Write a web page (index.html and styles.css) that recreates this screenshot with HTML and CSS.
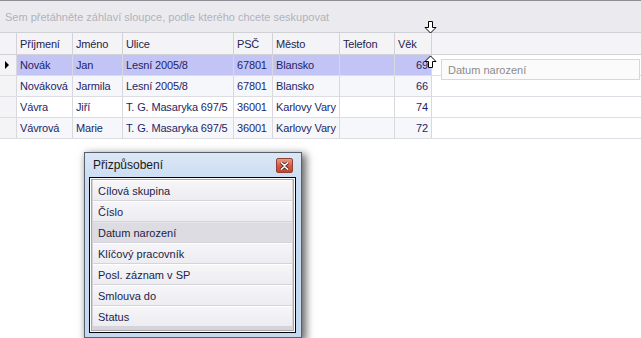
FILE: index.html
```html
<!DOCTYPE html>
<html lang="cs">
<head>
    <meta charset="UTF-8">
    <title>Přizpůsobení</title>
    <link rel="stylesheet" href="styles.css">
</head>
<body>

    <!-- group panel -->
    <div class="group-panel">Sem přetáhněte záhlaví sloupce, podle kterého chcete seskupovat</div>

    <!-- grid -->
    <div class="grid">
        <div class="row head">
            <div class="cell ind"></div>
            <div class="cell c1">Příjmení</div>
            <div class="cell c2">Jméno</div>
            <div class="cell c3">Ulice</div>
            <div class="cell c4">PSČ</div>
            <div class="cell c5">Město</div>
            <div class="cell c6">Telefon</div>
            <div class="cell c7">Věk</div>
        </div>
        <div class="row selected">
            <div class="cell ind"><span class="pointer"></span></div>
            <div class="cell c1">Novák</div>
            <div class="cell c2">Jan</div>
            <div class="cell c3">Lesní 2005/8</div>
            <div class="cell c4">67801</div>
            <div class="cell c5">Blansko</div>
            <div class="cell c6"></div>
            <div class="cell c7 num">69</div>
        </div>
        <div class="row alt">
            <div class="cell ind"></div>
            <div class="cell c1">Nováková</div>
            <div class="cell c2">Jarmila</div>
            <div class="cell c3">Lesní 2005/8</div>
            <div class="cell c4">67801</div>
            <div class="cell c5">Blansko</div>
            <div class="cell c6"></div>
            <div class="cell c7 num">66</div>
        </div>
        <div class="row">
            <div class="cell ind"></div>
            <div class="cell c1">Vávra</div>
            <div class="cell c2">Jiří</div>
            <div class="cell c3">T. G. Masaryka 697/5</div>
            <div class="cell c4">36001</div>
            <div class="cell c5">Karlovy Vary</div>
            <div class="cell c6"></div>
            <div class="cell c7 num">74</div>
        </div>
        <div class="row alt">
            <div class="cell ind"></div>
            <div class="cell c1">Vávrová</div>
            <div class="cell c2">Marie</div>
            <div class="cell c3">T. G. Masaryka 697/5</div>
            <div class="cell c4">36001</div>
            <div class="cell c5">Karlovy Vary</div>
            <div class="cell c6"></div>
            <div class="cell c7 num">72</div>
        </div>
    </div>

    <!-- dragged column header + drop arrows -->
    <div class="drag-item">Datum narození</div>
    <svg class="arrow arrow-down" width="13" height="13" viewBox="0 0 13 13">
        <path d="M4.5 0.5 H8.5 V6.5 H12 L6.5 12 L1 6.5 H4.5 Z" fill="#fff" stroke="#000" stroke-width="1"/>
    </svg>
    <svg class="arrow arrow-up" width="13" height="13" viewBox="0 0 13 13">
        <path d="M4.5 12.5 H8.5 V6.5 H12 L6.5 1 L1 6.5 H4.5 Z" fill="#fff" stroke="#000" stroke-width="1"/>
    </svg>

    <!-- customization window -->
    <div class="dialog">
        <div class="dlg-title">
            <span>Přizpůsobení</span>
            <div class="close">
                <svg width="9" height="8" viewBox="0 0 9 8">
                    <path d="M1 0.5 L4.5 3.5 L8 0.5 M1 7.5 L4.5 4.5 L8 7.5" stroke="#3a2a2a" stroke-width="3" fill="none"/>
                    <path d="M1 0.5 L4.5 3.5 L8 0.5 M1 7.5 L4.5 4.5 L8 7.5" stroke="#fff" stroke-width="1.6" fill="none"/>
                </svg>
            </div>
        </div>
        <div class="dlg-client">
            <div class="list">
                <div class="item">Cílová skupina</div>
                <div class="item">Číslo</div>
                <div class="item hot">Datum narození</div>
                <div class="item">Klíčový pracovník</div>
                <div class="item">Posl. záznam v SP</div>
                <div class="item">Smlouva do</div>
                <div class="item">Status</div>
            </div>
        </div>
    </div>

</body>
</html>
```

FILE: styles.css
```css
body {
    margin: 0;
    width: 641px;
    height: 338px;
    overflow: hidden;
    background: #fff;
    font-family: "Liberation Sans", Arial, sans-serif;
    font-size: 11px;
    position: relative;
}

/* group panel */
.group-panel {
    height: 33px;
    box-sizing: border-box;
    border-top: 1px solid #8e8e96;
    border-bottom: 1px solid #cfcfd6;
    background: #ebebef;
    color: #b2b2bc;
    padding: 0 5px;
    display: flex;
    align-items: center;
    white-space: nowrap;
}

/* grid */
.row {
    display: flex;
    height: 21px;
    box-sizing: border-box;
    border-bottom: 1px solid #dcdce2;
    color: #1f1f66;
    letter-spacing: -0.15px;
}

.row.head {
    height: 22px;
    background: #f4f4f6;
    border-bottom: 1px solid #d2d2d8;
    color: #23234f;
}

.cell {
    box-sizing: border-box;
    border-right: 1px solid #d8d8de;
    padding: 0 1px 0 3px;
    display: flex;
    align-items: center;
    white-space: nowrap;
    overflow: hidden;
}

.head .cell { border-right-color: #d2d2d8; }

.ind { width: 17px; padding: 0; background: #f4f4f6; }
.c1 { width: 56px; }
.c2 { width: 50px; }
.c3 { width: 111px; }
.c4 { width: 39px; }
.c5 { width: 67px; }
.c6 { width: 55px; }
.c7 { width: 37px; }
.num { justify-content: flex-end; padding-right: 3px; }

.row.alt .cell { background: #f6f7fb; }
.row.selected .cell { background: #c3c4f6; }
.row .cell.ind { background: #f4f4f6; }

.pointer {
    margin-left: 5px;
    width: 0;
    height: 0;
    border-left: 4px solid #000;
    border-top: 4px solid transparent;
    border-bottom: 4px solid transparent;
}

/* drag feedback */
.drag-item {
    position: absolute;
    left: 441px;
    top: 59px;
    width: 199px;
    height: 21px;
    box-sizing: border-box;
    border: 1px solid #d8d8dc;
    background: #fbfbfb;
    color: #8c8c8c;
    padding-left: 6px;
    display: flex;
    align-items: center;
}

.arrow {
    position: absolute;
    left: 424px;
}
.arrow-down { top: 21px; }
.arrow-up { top: 55px; }

/* customization window */
.dialog {
    position: absolute;
    left: 84px;
    top: 152px;
    width: 218px;
    height: 186px;
    box-sizing: border-box;
    border: 1px solid #56606c;
    background: linear-gradient(#dbe7f6, #c9dcf2 30px, #c4d8f0);
    box-shadow: 3px 3px 8px 1px rgba(0, 0, 0, 0.6);
}

.dlg-title {
    height: 24px;
    display: flex;
    align-items: center;
    justify-content: space-between;
    padding: 0 8px;
    font-size: 12px;
    color: #1a1a1a;
}

.close {
    width: 17px;
    height: 15px;
    box-sizing: border-box;
    border: 1px solid #8e4236;
    border-radius: 2px;
    background: linear-gradient(#eb9a86, #dc5a40 50%, #c8432c);
    display: flex;
    align-items: center;
    justify-content: center;
    margin-top: 1px;
}

.dlg-client {
    margin: 0 5px 0 4px;
    height: 156px;
    box-sizing: border-box;
    border: 1px solid #000;
    background: #fff;
    padding: 1px;
}

.list {
    height: 100%;
    box-sizing: border-box;
    border: 1px solid #a8a8b0;
    background: #d4d4da;
    padding: 0 1px;
    display: flex;
    flex-direction: column;
    gap: 1px;
}

.item {
    height: 20px;
    flex: none;
    box-sizing: border-box;
    border-top: 1px solid #fff;
    background: linear-gradient(#f6f6f9, #ececf1);
    color: #1c1c48;
    padding-left: 5px;
    display: flex;
    align-items: center;
}

.item.hot {
    background: #dcdce2;
    border-top-color: #e6e6ea;
}
```
